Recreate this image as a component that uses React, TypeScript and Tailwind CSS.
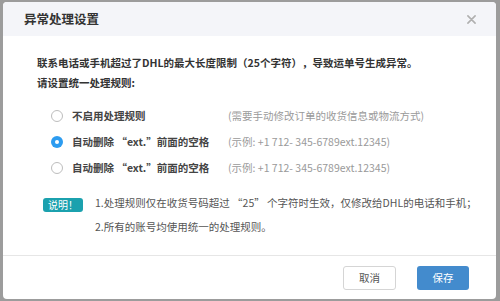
import React, { useState } from 'react';

const font = { fontFamily: '"Noto Sans CJK SC", "Noto Sans", sans-serif' };

const options = [
  { label: '不启用处理规则', hint: '(需要手动修改订单的收货信息或物流方式)' },
  { label: '自动删除 “ext.”前面的空格', hint: '(示例: +1 712- 345-6789ext.12345)' },
  { label: '自动删除 “ext.”前面的空格', hint: '(示例: +1 712- 345-6789ext.12345)' },
];

const App: React.FC = () => {
  const [selected, setSelected] = useState(1);

  return (
    <div
      className="w-[500px] h-[301px] bg-[#9c9c9c] pl-[3px] pt-[2px] overflow-hidden [text-spacing-trim:space-all]"
      style={font}
    >
      <div className="w-[493px] h-[297px] bg-white rounded-[4px] overflow-hidden flex flex-col">
        {/* Header */}
        <div className="h-[34px] shrink-0 bg-[#f4f5f9] flex items-center justify-between pl-[21px] pr-[20px]">
          <h1 className="text-[12.5px] font-bold text-[#333]">异常处理设置</h1>
          <button className="text-[#b0b0b0]">
            <svg width="9" height="9" viewBox="0 0 10 10">
              <path d="M1 1 L9 9 M9 1 L1 9" stroke="currentColor" strokeWidth="1.8" strokeLinecap="round" />
            </svg>
          </button>
        </div>

        {/* Body */}
        <div className="flex-1 pl-[34px] pt-[17px] border-b border-[#e6e6e6]">
          <p className="text-[10.5px] leading-[20px] font-bold text-[#333]">
            联系电话或手机超过了DHL的最大长度限制（25个字符），导致运单号生成异常。
          </p>
          <p className="text-[10.5px] leading-[20px] font-bold text-[#333]">请设置统一处理规则:</p>

          <div className="mt-[10px] pl-[14px]">
            {options.map((o, i) => (
              <div
                key={i}
                className="h-[26px] flex items-center cursor-pointer"
                onClick={() => setSelected(i)}
              >
                {selected === i ? (
                  <span className="w-[12px] h-[12px] rounded-full bg-[#2d9cf0] flex items-center justify-center shrink-0">
                    <span className="w-[4px] h-[4px] rounded-full bg-white" />
                  </span>
                ) : (
                  <span className="w-[12px] h-[12px] rounded-full border border-[#bdbdbd] bg-white shrink-0" />
                )}
                <span className="ml-[9px] w-[156px] text-[10.5px] font-bold text-[#444]">{o.label}</span>
                <span className="text-[10.5px] text-[#9a9a9a]">{o.hint}</span>
              </div>
            ))}
          </div>

          <div className="mt-[10px] flex items-start pl-[6px]">
            <span className="mt-[7px] w-[40px] h-[14px] rounded-[3px] bg-[#1ba1ae] text-white text-[10px] leading-[14px] text-center shrink-0">
              说明！
            </span>
            <div className="ml-[12px] text-[10.5px] leading-[24px] text-[#555]">
              <p>1.处理规则仅在收货号码超过 “25” 个字符时生效，仅修改给DHL的电话和手机；</p>
              <p>2.所有的账号均使用统一的处理规则。</p>
            </div>
          </div>
        </div>

        {/* Footer */}
        <div className="h-[43px] shrink-0 flex items-center justify-end gap-[21px] pr-[27px]">
          <button className="w-[53px] h-[24px] rounded-[3px] border border-[#d5d5d5] bg-white text-[10.5px] text-[#555]">
            取消
          </button>
          <button className="w-[52px] h-[24px] rounded-[3px] bg-[#438bcd] text-[10.5px] text-white">
            保存
          </button>
        </div>
      </div>
    </div>
  );
};

export default App;
